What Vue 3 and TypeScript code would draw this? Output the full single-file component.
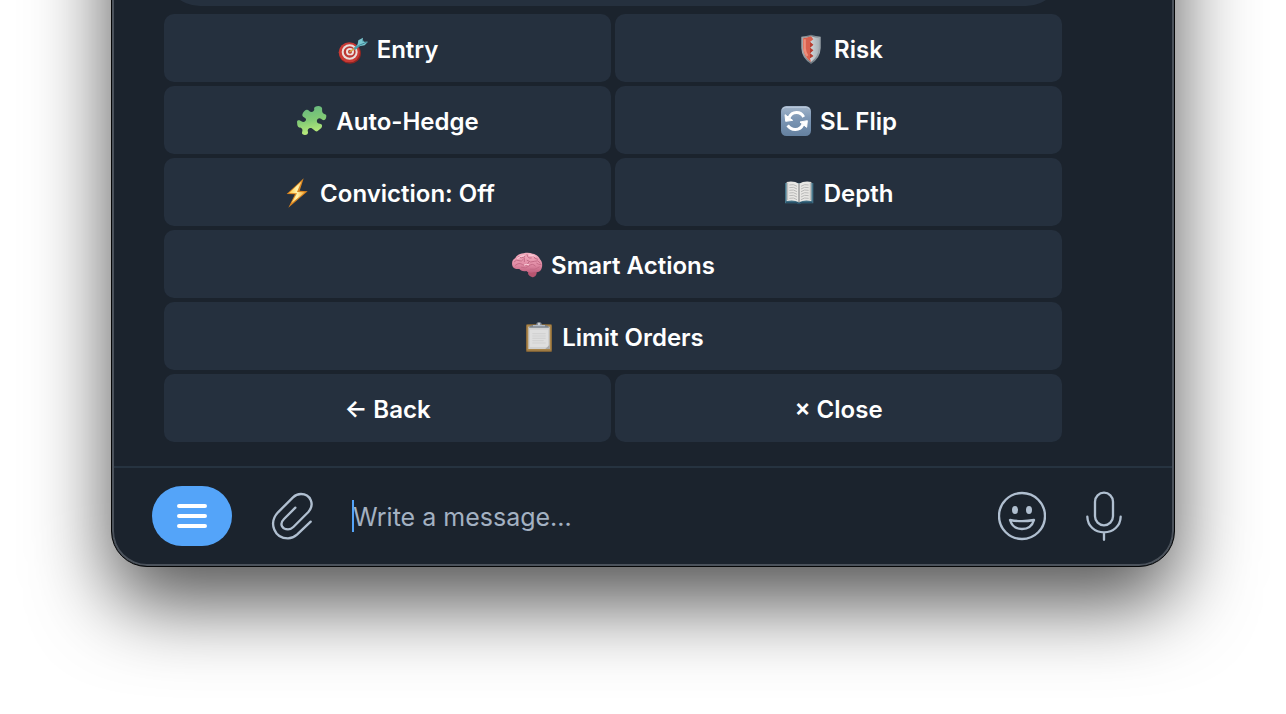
<script setup lang="ts">
import { ref } from 'vue'

type IconName = 'target' | 'shield' | 'puzzle' | 'refresh' | 'bolt' | 'book' | 'brain' | 'clipboard'

interface KeyboardButton {
  label: string
  icon?: IconName
  wide?: boolean
}

const buttons: KeyboardButton[] = [
  { label: 'Entry', icon: 'target' },
  { label: 'Risk', icon: 'shield' },
  { label: 'Auto-Hedge', icon: 'puzzle' },
  { label: 'SL Flip', icon: 'refresh' },
  { label: 'Conviction: Off', icon: 'bolt' },
  { label: 'Depth', icon: 'book' },
  { label: 'Smart Actions', icon: 'brain', wide: true },
  { label: 'Limit Orders', icon: 'clipboard', wide: true },
  { label: '← Back' },
  { label: '× Close' },
]

const message = ref('')
</script>

<template>
  <div class="stage">
    <main class="window">
      <section class="chat">
        <div class="bubble"></div>
        <div class="keyboard">
          <button
            v-for="button in buttons"
            :key="button.label"
            type="button"
            class="key"
            :class="{ wide: button.wide }"
          >
            <svg v-if="button.icon" class="emoji" viewBox="0 0 96 96" aria-hidden="true">
              <g v-if="button.icon === 'target'">
                <ellipse cx="39" cy="61" rx="33" ry="31" fill="#8e2522" />
                <ellipse cx="37" cy="58" rx="32" ry="30" fill="#c93a35" />
                <ellipse cx="38" cy="57" rx="24" ry="23" fill="#e9dddb" />
                <ellipse cx="38" cy="57" rx="18" ry="17" fill="#bd3733" />
                <ellipse cx="39" cy="56" rx="12" ry="11" fill="#eee2e0" />
                <ellipse cx="39" cy="56" rx="6" ry="6" fill="#b9302d" />
                <path d="M39 56 58 43" stroke="#d8a648" stroke-width="5" stroke-linecap="round" />
                <path d="M55 46 77 26" stroke="#4b9dab" stroke-width="8" stroke-linecap="round" />
                <path d="M61 38 64 22 78 14 76 26 93 26 83 37 67 40Z" fill="#78c5cf" />
                <path d="M64 38 90 27" stroke="#3c8797" stroke-width="3" />
              </g>
              <g v-else-if="button.icon === 'shield'">
                <defs>
                  <linearGradient id="shield-rim" x1="0" x2="1">
                    <stop offset="0" stop-color="#a9adb0" />
                    <stop offset=".5" stop-color="#6e777e" />
                    <stop offset="1" stop-color="#a3abb1" />
                  </linearGradient>
                  <linearGradient id="shield-steel" x1="0" x2="1">
                    <stop offset="0" stop-color="#f2f2f2" />
                    <stop offset="1" stop-color="#a8b0b6" />
                  </linearGradient>
                </defs>
                <path d="M51 5 Q65 10 80 11 V45 Q79 75 51 93 Q23 75 22 45 V11 Q37 10 51 5Z" fill="url(#shield-rim)" />
                <path d="M51 10 Q64 15 75 16 V45 Q73 71 51 87 Q29 71 27 45 V16 Q38 15 51 10Z" fill="url(#shield-steel)" />
                <path d="M51 10 Q38 15 27 16 V45 Q29 71 51 87 L48 76 58 69 48 61 58 52 48 44 58 35 48 27 58 19Z" fill="#d9604e" />
                <path d="M48 27 58 35 48 44 58 52 48 61 58 69 48 76Z" fill="#b43e32" />
                <path d="M32 19V46Q33 58 40 69" fill="none" stroke="#ee8e7b" stroke-width="7" />
              </g>
              <g v-else-if="button.icon === 'puzzle'">
                <defs>
                  <linearGradient id="puzzle-green" x1=".3" y1="0" x2=".5" y2="1">
                    <stop offset="0" stop-color="#66b77f" />
                    <stop offset=".5" stop-color="#82ca75" />
                    <stop offset="1" stop-color="#c0ee7c" />
                  </linearGradient>
                </defs>
                <path
                  d="M32 14 C38 13 41 22 48 21 C55 19 56 13 54 9 C58 3 69 1 76 6 C81 11 76 17 80 23 C84 28 91 26 91 33 C91 41 87 47 81 45 C75 42 71 37 65 42 C60 47 63 56 72 56 C79 57 80 63 76 69 L64 79 C57 81 53 72 46 69 C38 67 33 75 36 80 C38 88 28 93 20 88 C15 83 22 77 18 71 C14 66 6 70 4 60 L3 50 C5 43 12 46 16 49 C23 54 31 49 30 43 C28 37 20 38 19 31 C19 25 25 15 32 14Z"
                  fill="url(#puzzle-green)"
                />
              </g>
              <g v-else-if="button.icon === 'refresh'">
                <defs>
                  <linearGradient id="refresh-tile" x2="0" y2="1">
                    <stop offset="0" stop-color="#a3b5ca" />
                    <stop offset=".4" stop-color="#7e98b6" />
                    <stop offset="1" stop-color="#64809f" />
                  </linearGradient>
                </defs>
                <rect x="3" y="3" width="90" height="90" rx="16" fill="url(#refresh-tile)" />
                <path d="M8 13 Q9 7 17 7 H79 Q87 7 88 13" fill="none" stroke="#bccbdc" stroke-width="3" />
                <g fill="none" stroke="#fff" stroke-width="9">
                  <path d="M27 38 C36 18 62 18 71 36" />
                  <path d="M69 58 C60 78 34 78 23 61" />
                </g>
                <path d="M15 29 17 49 38 46Z M82 47 60 51 80 67Z" fill="#fff" stroke="#fff" stroke-width="3" stroke-linejoin="round" />
              </g>
              <g v-else-if="button.icon === 'bolt'">
                <defs>
                  <linearGradient id="bolt-fill" x1="0" x2="1">
                    <stop offset="0" stop-color="#ffc845" />
                    <stop offset=".5" stop-color="#fff4ae" />
                    <stop offset="1" stop-color="#f7a92f" />
                  </linearGradient>
                </defs>
                <path d="M71 4 20 51 45 52 25 92 83 43 59 41Z" fill="#d98420" />
                <path d="M65 13 27 48 51 49 34 79 75 46 51 45Z" fill="url(#bolt-fill)" />
              </g>
              <g v-else-if="button.icon === 'book'">
                <path d="M3 18 H88 V79 H51 L45 82 39 79 H3Z" fill="#457489" />
                <path d="M6 76 H39 L45 80 51 76 H85" fill="none" stroke="#244c66" stroke-width="3" />
                <path d="M8 15 Q30 11 45 20 Q61 11 82 15 V72 Q60 67 45 76 Q30 67 8 72Z" fill="#e8e7e4" />
                <path d="M45 20 V76" stroke="#77797b" stroke-width="3" />
                <path d="M11 17V69 M79 17V69" stroke="#b5b5b3" stroke-width="3" />
                <path
                  d="M16 24Q29 20 39 28M16 32Q29 28 39 36M16 40Q29 36 39 44M16 48Q29 44 39 52M16 56Q29 52 39 60M16 64Q29 60 39 68M51 28Q61 20 74 24M51 36Q61 28 74 32M51 44Q61 36 74 40M51 52Q61 44 74 48M51 60Q61 52 74 56M51 68Q61 60 74 64"
                  fill="none"
                  stroke="#b9b9b8"
                  stroke-width="3"
                />
              </g>
              <g v-else-if="button.icon === 'brain'">
                <defs>
                  <linearGradient id="brain-pink" x2="0" y2="1">
                    <stop offset="0" stop-color="#f4afc0" />
                    <stop offset=".6" stop-color="#e08ba4" />
                    <stop offset="1" stop-color="#c0607e" />
                  </linearGradient>
                </defs>
                <path d="M52 66 Q62 61 77 68 Q78 79 68 84 Q58 87 51 75Z" fill="#b75570" />
                <path
                  d="M4 50 C1 38 6 31 13 27 C18 17 29 13 38 13 C49 10 58 12 65 14 C77 16 84 23 87 31 C94 38 95 48 92 58 C90 68 79 72 70 69 C60 73 51 71 46 66 C36 69 28 64 25 60 C14 61 6 57 4 50Z"
                  fill="url(#brain-pink)"
                />
                <path
                  d="M10 38Q17 30 24 35T37 31M23 23Q31 31 42 22M48 17Q50 30 61 27M68 21Q69 31 80 31M13 49Q24 39 35 47T53 40M48 34Q59 43 70 37T88 42M31 55Q44 61 54 51T73 51M58 61Q71 65 85 54M77 43Q82 47 90 47M40 27V38"
                  fill="none"
                  stroke="#c46c87"
                  stroke-width="3"
                  stroke-linecap="round"
                />
                <path d="M20 28Q29 20 39 20M54 18Q64 17 72 22M40 48Q48 44 53 47" fill="none" stroke="#ffd5df" stroke-width="3" stroke-linecap="round" />
              </g>
              <g v-else>
                <rect x="12" y="10" width="78" height="83" rx="4" fill="#7d6037" />
                <rect x="14" y="11" width="74" height="78" rx="3" fill="#a98449" />
                <path d="M19 17H83V84H19Z" fill="#cfd0d1" />
                <path d="M24 26H78V78H24Z" fill="#dedede" />
                <path d="M31 38H71M31 45H71M31 52H71M31 59H65M31 66H71" stroke="#c8c8c9" stroke-width="2" />
                <path d="M21 20 Q23 12 36 12 H42 Q43 3 51 3 Q59 3 60 12 H66 Q79 12 81 20Z" fill="#7b828c" />
                <path d="M33 14H69" stroke="#b2bac4" stroke-width="4" />
                <circle cx="51" cy="9" r="4" fill="#c8cdd4" />
                <path d="M83 71V84H70Z" fill="#a9a9a9" />
              </g>
            </svg>
            <span class="label">{{ button.label }}</span>
          </button>
        </div>
      </section>

      <form class="composer" @submit.prevent>
        <button type="button" class="menu" aria-label="Menu">
          <svg width="32" height="28" viewBox="0 0 32 28" aria-hidden="true">
            <path d="M3 4H29M3 14H29M3 24H29" stroke="#fff" stroke-width="4" stroke-linecap="round" />
          </svg>
        </button>
        <button type="button" class="tool" aria-label="Attach file">
          <svg width="44" height="52" viewBox="0 0 132 156" class="line-icon" aria-hidden="true">
            <path
              d="M76 53 42 87 C26 103 38 118 54 118 C61 118 66 115 70 111 L115 66 C136 42 120 12 93 12 C83 12 75 16 69 22 L24 67 C-6 100 14 145 54 145 C64 145 73 141 81 134 L122 95"
            />
          </svg>
        </button>
        <div class="field">
          <span class="caret"></span>
          <input v-model="message" type="text" aria-label="Message" placeholder="Write a message..." />
        </div>
        <button type="button" class="tool" aria-label="Emoji">
          <svg width="48" height="52" viewBox="0 0 144 156" class="line-icon" aria-hidden="true">
            <circle cx="72" cy="78" r="69" />
            <path d="M36 90 Q72 97 108 90 C103 107 90 117 72 117 C54 117 41 107 36 90Z" />
            <ellipse cx="51" cy="60" rx="9" ry="12" class="eye" />
            <ellipse cx="93" cy="60" rx="9" ry="12" class="eye" />
          </svg>
        </button>
        <button type="button" class="tool" aria-label="Record voice message">
          <svg width="36" height="52" viewBox="0 0 108 156" class="line-icon" aria-hidden="true">
            <rect x="27" y="8" width="54" height="98" rx="27" />
            <path d="M4 80 C5 108 26 127 54 127 C82 127 103 108 104 80 M54 127V149" />
          </svg>
        </button>
      </form>
    </main>
  </div>
</template>

<style>
body {
  margin: 0;
  background: #fff;
}
</style>

<style scoped>
.stage {
  box-sizing: border-box;
  min-height: 100vh;
  padding: 0 111px 100px;
  overflow: hidden;
  font-family: Inter, 'Liberation Sans', sans-serif;
}

.window {
  margin-top: -200px;
  border: 1px solid #050607;
  border-radius: 36px;
  background: #1b232d;
  box-shadow:
    inset 0 0 0 2px #4b525b,
    0 36px 80px rgba(0, 0, 0, 0.68);
}

.chat {
  padding: 2px 112px 24px 52px;
}

.bubble {
  height: 203px;
  margin-bottom: 8px;
  border-radius: 36px;
  background: #25303e;
}

.keyboard {
  display: grid;
  grid-template-columns: 1fr 1fr;
  gap: 4px;
}

.key {
  display: flex;
  align-items: center;
  justify-content: center;
  gap: 8px;
  height: 68px;
  padding: 2px 0 0;
  border: 0;
  border-radius: 10px;
  background: #25303e;
  color: #fff;
  font: 600 24px/32px Inter, 'Liberation Sans', sans-serif;
}

.wide {
  grid-column: span 2;
}

.emoji {
  width: 32px;
  height: 32px;
}

.label {
  padding-top: 2px;
}

.composer {
  display: flex;
  align-items: center;
  margin: 0 2px;
  padding: 18px 50px 20px 38px;
  border-top: 2px solid #263340;
}

.menu {
  display: flex;
  align-items: center;
  justify-content: center;
  width: 80px;
  height: 60px;
  margin-right: 38px;
  padding: 0;
  border: 0;
  border-radius: 30px;
  background: #54a4f9;
}

.tool {
  display: flex;
  padding: 0;
  border: 0;
  background: none;
}

.line-icon {
  fill: none;
  stroke: #b0bfd0;
  stroke-width: 7;
  stroke-linecap: round;
  stroke-linejoin: round;
}

.eye {
  fill: #b0bfd0;
  stroke: none;
}

.field {
  position: relative;
  flex: 1;
  margin: 0 40px 0 38px;
}

.caret {
  position: absolute;
  top: 0;
  left: 0;
  width: 2px;
  height: 32px;
  background: #54a4f9;
}

.field input {
  display: block;
  box-sizing: border-box;
  width: 100%;
  height: 32px;
  padding: 2px 0 0 1px;
  border: 0;
  outline: 0;
  background: none;
  color: #fff;
  font: 400 25px/30px Inter, 'Liberation Sans', sans-serif;
}

.field input::placeholder {
  color: #a3b1c2;
  opacity: 1;
}

.tool + .tool {
  margin-left: 40px;
}
</style>
